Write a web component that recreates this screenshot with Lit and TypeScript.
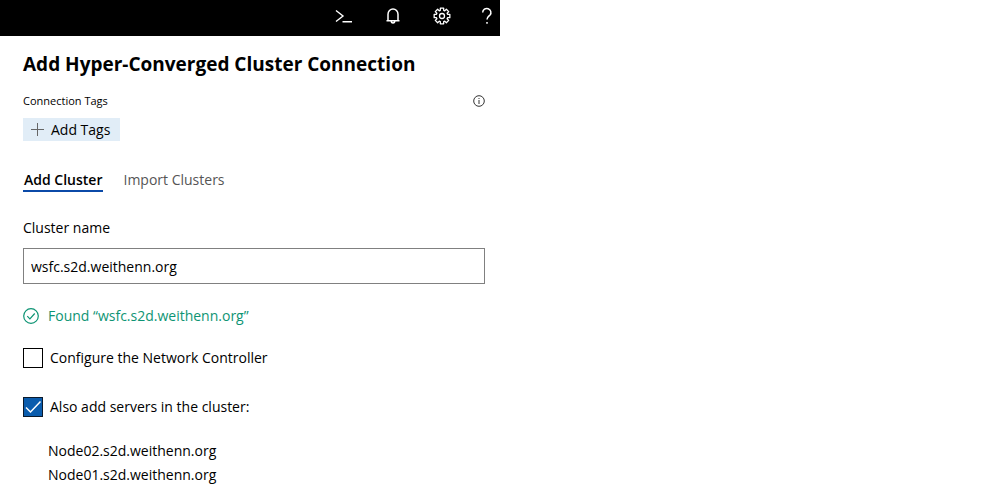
import { LitElement, html, css } from "lit";
import { customElement, property, state } from "lit/decorators.js";

// Outline of an eight-toothed gear centred in an 18 by 18 box.
const gearPath = (() => {
  const points: string[] = [];
  for (let tooth = 0; tooth < 8; tooth++) {
    for (const [offset, radius] of [[-17, 5.8], [-12, 8], [12, 8], [17, 5.8]]) {
      const angle = ((tooth * 45 + offset) * Math.PI) / 180;
      points.push(`${(9 + radius * Math.cos(angle)).toFixed(2)} ${(9 + radius * Math.sin(angle)).toFixed(2)}`);
    }
  }
  return `M${points.join("L")}Z`;
})();

@customElement("check-row")
class CheckRow extends LitElement {
  @property() label = "";
  @property({ type: Boolean }) checked = false;

  static styles = css`
    :host { display: block; }
    .row { display: flex; align-items: center; gap: 7px; line-height: 20px; }
    .control { display: grid; flex: none; }
    .box, .mark { grid-area: 1 / 1; width: 20px; height: 20px; }
    .box {
      appearance: none; box-sizing: border-box; margin: 0;
      border: 1px solid #000; background: #fff;
    }
    .box:checked { background: #0a5cad; border-color: #0b1a2c; }
    .mark { pointer-events: none; fill: none; stroke: #fff; stroke-width: 1.5; visibility: hidden; }
    .box:checked + .mark { visibility: visible; }
  `;

  render() {
    return html`
      <label class="row">
        <span class="control">
          <input class="box" type="checkbox" .checked=${this.checked} />
          <svg class="mark" viewBox="0 0 20 20" aria-hidden="true"><path d="M3 10.5 7.5 15 17.5 4.5" /></svg>
        </span>
        <span>${this.label}</span>
      </label>
    `;
  }
}

@customElement("app-root")
class AppRoot extends LitElement {
  @state() private clusterName = "wsfc.s2d.weithenn.org";
  private nodes = ["Node02.s2d.weithenn.org", "Node01.s2d.weithenn.org"];

  static styles = css`
    :host {
      display: block; background: #fff; color: #000;
      font: 14px/20px "Open Sans", "Noto Sans", sans-serif;
    }
    .panel { width: 50%; }
    button, input { font: inherit; color: inherit; }
    button { border: 0; padding: 0; background: none; }
    svg { display: block; fill: none; stroke: currentColor; }
    .bar {
      display: flex; justify-content: flex-end; gap: 30px;
      height: 36px; padding-right: 7px; box-sizing: border-box;
      background: #000; color: #fff;
    }
    .bar button { display: flex; align-items: center; padding-bottom: 4px; }
    .content { padding: 14px 15px 6px 23px; }
    h1 { margin: 0; font-size: 19px; line-height: 28px; font-weight: 700; }
    .tags-head {
      display: flex; justify-content: space-between; align-items: center;
      margin-top: 15px; font-size: 11px; line-height: 16px;
    }
    .info { color: #333; }
    .add {
      display: flex; align-items: center; gap: 7px; height: 23px;
      margin-top: 9px; padding: 0 10px 0 8px; background: #e1edf7;
    }
    .add svg { color: #666; }
    .tabs { display: flex; gap: 19px; margin-top: 29px; }
    .tab { height: 22px; padding: 0 1px; color: #555; border-bottom: 2px solid transparent; }
    .tab.active { color: #000; font-weight: 600; border-color: #0b4aa8; }
    .field { display: block; margin-top: 26px; }
    .name {
      display: block; width: 100%; height: 36px; box-sizing: border-box;
      margin-top: 10px; padding: 0 7px; border: 1px solid #808080;
      border-radius: 0; background: #fff;
    }
    .found { display: flex; align-items: center; gap: 9px; margin-top: 22px; color: #0e9474; }
    .configure { margin-top: 22px; }
    .servers { margin-top: 29px; }
    .nodes { margin: 22px 0 0; padding: 0 0 0 25px; list-style: none; line-height: 24px; }
  `;

  render() {
    return html`
      <main class="panel">
        <header class="bar">
          <button type="button" aria-label="PowerShell">
            <svg width="18" height="18" viewBox="0 0 18 18" stroke-width="1.4"><path d="M1 3.5 8 9 1 14.5M7.5 14.7h9.5" /></svg>
          </button>
          <button type="button" aria-label="Notifications">
            <svg width="20" height="18" viewBox="0 0 20 18" stroke-width="1.5"><path d="M3.5 13.8h13M5 13.8V7.2a5 5.2 0 0 1 10 0v6.6M8.2 14.1a1.8 1.8 0 0 0 3.6 0" /></svg>
          </button>
          <button type="button" aria-label="Settings">
            <svg width="18" height="18" viewBox="0 0 18 18" stroke-width="1.3">
              <path stroke-linejoin="round" d=${gearPath} />
              <circle cx="9" cy="9" r="2.5" />
            </svg>
          </button>
          <button type="button" aria-label="Help">
            <svg width="12" height="18" viewBox="0 0 12 18" stroke-width="1.5"><path d="M1.7 5.5A4.1 4 0 1 1 9 8C7.3 9.7 6 10.3 6 12.6M6 15v1.8" /></svg>
          </button>
        </header>

        <section class="content">
          <h1>Add Hyper-Converged Cluster Connection</h1>

          <div class="tags-head">
            <span>Connection Tags</span>
            <button class="info" type="button" aria-label="About connection tags">
              <svg width="12" height="12" viewBox="0 0 12 12"><circle cx="6" cy="6" r="5.3" /><path d="M6 5v4M6 3v1" /></svg>
            </button>
          </div>
          <button class="add" type="button">
            <svg width="13" height="13" viewBox="0 0 13 13" aria-hidden="true"><path d="M0 6.5h13M6.5 0v13" /></svg>
            <span>Add Tags</span>
          </button>

          <div class="tabs" role="tablist">
            <button class="tab active" type="button" role="tab" aria-selected="true">Add Cluster</button>
            <button class="tab" type="button" role="tab" aria-selected="false">Import Clusters</button>
          </div>

          <label class="field" for="cluster">Cluster name</label>
          <input class="name" id="cluster" type="text" .value=${this.clusterName} />

          <div class="found" role="status">
            <svg width="16" height="16" viewBox="0 0 16 16" stroke-width="1.2" aria-hidden="true"><circle cx="8" cy="8" r="7.3" /><path d="M4.3 8.2 6.9 10.8 11.7 5.5" /></svg>
            <span>Found “${this.clusterName}”</span>
          </div>

          <check-row class="configure" label="Configure the Network Controller"></check-row>
          <check-row class="servers" label="Also add servers in the cluster:" checked></check-row>

          <ul class="nodes">
            ${this.nodes.map((node) => html`<li>${node}</li>`)}
          </ul>
        </section>
      </main>
    `;
  }
}
